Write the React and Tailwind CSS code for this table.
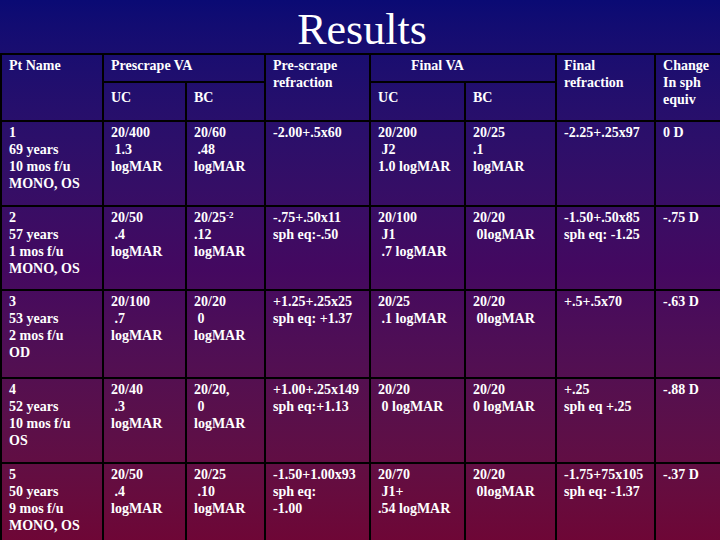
import React from "react";

const rows = [
  {
    h: "h-[85px]",
    cells: [
      ["1", "69 years", "10 mos f/u", "MONO, OS"],
      ["20/400", " 1.3", "logMAR"],
      ["20/60", " .48", "logMAR"],
      ["-2.00+.5x60"],
      ["20/200", " J2", "1.0 logMAR"],
      ["20/25", ".1", "logMAR"],
      ["-2.25+.25x97"],
      ["0 D"],
    ],
  },
  {
    h: "h-[84px]",
    cells: [
      ["2", "57 years", "1 mos f/u", "MONO, OS"],
      ["20/50", " .4", "logMAR"],
      [
        <>
          20/25<sup className="text-[9px] font-bold">-2</sup>
        </>,
        ".12",
        "logMAR",
      ],
      ["-.75+.50x11", "sph eq:-.50"],
      ["20/100", " J1", " .7 logMAR"],
      ["20/20", " 0logMAR"],
      ["-1.50+.50x85", "sph eq: -1.25"],
      ["-.75 D"],
    ],
  },
  {
    h: "h-[88px]",
    cells: [
      ["3", "53 years", "2 mos f/u", "OD"],
      ["20/100", " .7", "logMAR"],
      ["20/20", " 0", "logMAR"],
      ["+1.25+.25x25", "sph eq: +1.37"],
      ["20/25", " .1 logMAR"],
      ["20/20", " 0logMAR"],
      ["+.5+.5x70"],
      ["-.63 D"],
    ],
  },
  {
    h: "h-[85px]",
    cells: [
      ["4", "52 years", "10 mos f/u", "OS"],
      ["20/40", " .3", "logMAR"],
      ["20/20,", " 0", "logMAR"],
      ["+1.00+.25x149", "sph eq:+1.13"],
      ["20/20", " 0 logMAR"],
      ["20/20", "0 logMAR"],
      ["+.25", "sph eq +.25"],
      ["-.88 D"],
    ],
  },
  {
    h: "h-[85px]",
    cells: [
      ["5", "50 years", "9 mos f/u", "MONO, OS"],
      ["20/50", " .4", "logMAR"],
      ["20/25", " .10", "logMAR"],
      ["-1.50+1.00x93", "sph eq:", "-1.00"],
      ["20/70", " J1+", ".54 logMAR"],
      ["20/20", " 0logMAR"],
      ["-1.75+75x105", "sph eq: -1.37"],
      ["-.37 D"],
    ],
  },
];

const cell = "border-2 border-black align-top pl-[7px] pt-[2px]";

function Lines({ lines }) {
  return lines.map((l, i) => (
    <div key={i} className="whitespace-pre">
      {l}
    </div>
  ));
}

export default function App() {
  return (
    <div
      className="w-[720px] h-[540px] overflow-hidden text-white bg-gradient-to-b from-[#0a0a74] via-[#440860] to-[#6e0636]"
      style={{ fontFamily: '"Liberation Serif", "Times New Roman", serif' }}
    >
      <div className="h-[53px] pt-[8px] text-center text-[44px] leading-[44px] pl-[4px]">
        Results
      </div>
      <table className="w-[720px] table-fixed border-collapse text-[14px] leading-[17px] font-bold">
        <colgroup>
          <col className="w-[102px]" />
          <col className="w-[83px]" />
          <col className="w-[79px]" />
          <col className="w-[105px]" />
          <col className="w-[95px]" />
          <col className="w-[91px]" />
          <col className="w-[99px]" />
          <col className="w-[66px]" />
        </colgroup>
        <thead>
          <tr className="h-[28px]">
            <th rowSpan={2} className={cell + " text-left font-bold"}>
              Pt Name
            </th>
            <th colSpan={2} className={cell + " text-left font-bold"}>
              Prescrape VA
            </th>
            <th rowSpan={2} className={cell + " text-left font-bold"}>
              Pre-scrape
              <br />
              refraction
            </th>
            <th colSpan={2} className={cell + " text-left font-bold !pl-[40px]"}>
              Final VA
            </th>
            <th rowSpan={2} className={cell + " text-left font-bold"}>
              Final
              <br />
              refraction
            </th>
            <th rowSpan={2} className={cell + " text-left font-bold"}>
              Change
              <br />
              In sph
              <br />
              equiv
            </th>
          </tr>
          <tr className="h-[39px]">
            <th className={cell + " text-left font-bold !pt-[6px]"}>UC</th>
            <th className={cell + " text-left font-bold !pt-[6px]"}>BC</th>
            <th className={cell + " text-left font-bold !pt-[6px]"}>UC</th>
            <th className={cell + " text-left font-bold !pt-[6px]"}>BC</th>
          </tr>
        </thead>
        <tbody>
          {rows.map((r, i) => (
            <tr key={i} className={r.h}>
              {r.cells.map((c, j) => (
                <td key={j} className={cell}>
                  <Lines lines={c} />
                </td>
              ))}
            </tr>
          ))}
        </tbody>
      </table>
    </div>
  );
}
